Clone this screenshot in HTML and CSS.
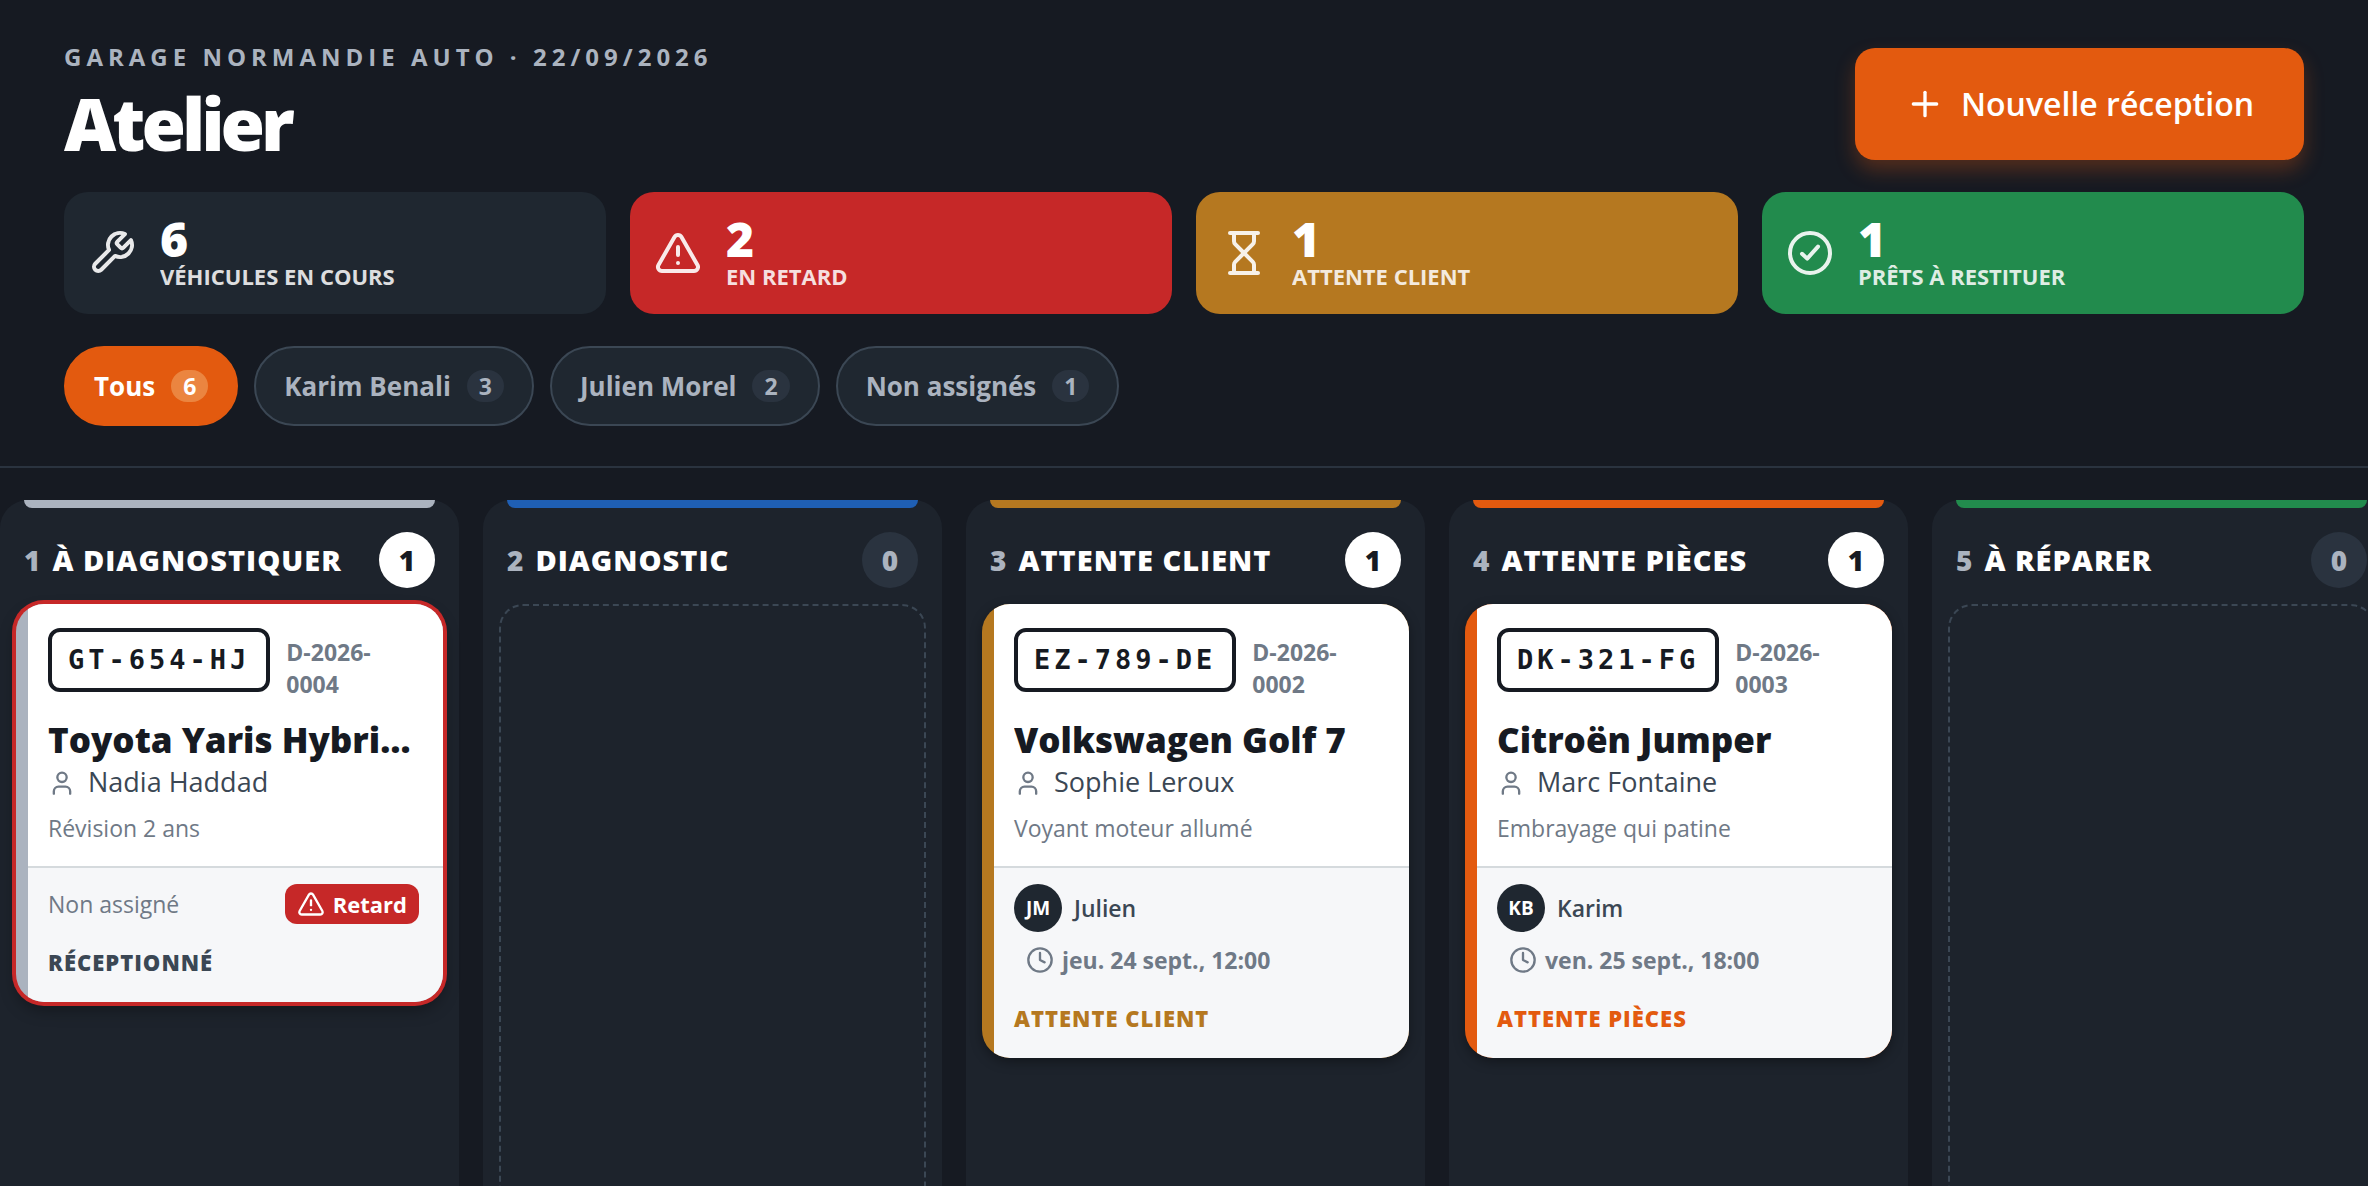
FILE: index.html
```html
<!DOCTYPE html>
<html lang="fr">
<head>
  <meta charset="UTF-8">
  <meta name="viewport" content="width=device-width, initial-scale=1.0">
  <title>Atelier</title>
  <link rel="stylesheet" href="styles.css">
</head>
<body>
  <!-- Icons -->
  <svg class="sprite" aria-hidden="true">
    <symbol id="i-wrench" viewBox="0 0 24 24"><path d="M14.7 6.3a1 1 0 0 0 0 1.4l1.6 1.6a1 1 0 0 0 1.4 0l3.77-3.77a6 6 0 0 1-7.94 7.94l-6.91 6.91a2.12 2.12 0 0 1-3-3l6.91-6.91a6 6 0 0 1 7.94-7.94l-3.76 3.76z"/></symbol>
    <symbol id="i-alert" viewBox="0 0 24 24"><path d="m21.73 18-8-14a2 2 0 0 0-3.48 0l-8 14A2 2 0 0 0 4 21h16a2 2 0 0 0 1.73-3Z"/><path d="M12 9v4"/><path d="M12 17h.01"/></symbol>
    <symbol id="i-hourglass" viewBox="0 0 24 24"><path d="M5 22h14"/><path d="M5 2h14"/><path d="M17 22v-4.172a2 2 0 0 0-.586-1.414L12 12l-4.414 4.414A2 2 0 0 0 7 17.828V22"/><path d="M7 2v4.172a2 2 0 0 0 .586 1.414L12 12l4.414-4.414A2 2 0 0 0 17 6.172V2"/></symbol>
    <symbol id="i-check" viewBox="0 0 24 24"><circle cx="12" cy="12" r="10"/><path d="m8 12.4 2.6 2.4 5.4-6"/></symbol>
    <symbol id="i-plus" viewBox="0 0 24 24"><path d="M5 12h14"/><path d="M12 5v14"/></symbol>
    <symbol id="i-user" viewBox="0 0 24 24"><path d="M19 22v-2a4 4 0 0 0-4-4H9a4 4 0 0 0-4 4v2"/><circle cx="12" cy="8" r="4"/></symbol>
    <symbol id="i-clock" viewBox="0 0 24 24"><circle cx="12" cy="12" r="10"/><path d="M12 6v6l4 2"/></symbol>
  </svg>

  <header class="header">
    <div class="header-top">
      <div>
        <p class="eyebrow">Garage Normandie Auto · 22/09/2026</p>
        <h1>Atelier</h1>
      </div>
      <button type="button" class="btn-new">
        <svg class="icon icon-lg"><use href="#i-plus"/></svg>
        Nouvelle réception
      </button>
    </div>

    <!-- Stats -->
    <div class="stats">
      <div class="stat">
        <svg class="icon icon-xl"><use href="#i-wrench"/></svg>
        <div><div class="stat-value">6</div><div class="stat-label">Véhicules en cours</div></div>
      </div>
      <div class="stat red">
        <svg class="icon icon-xl"><use href="#i-alert"/></svg>
        <div><div class="stat-value">2</div><div class="stat-label">En retard</div></div>
      </div>
      <div class="stat amber">
        <svg class="icon icon-xl"><use href="#i-hourglass"/></svg>
        <div><div class="stat-value">1</div><div class="stat-label">Attente client</div></div>
      </div>
      <div class="stat green">
        <svg class="icon icon-xl"><use href="#i-check"/></svg>
        <div><div class="stat-value">1</div><div class="stat-label">Prêts à restituer</div></div>
      </div>
    </div>

    <!-- Filters -->
    <div class="filters">
      <button type="button" class="chip active">Tous <span class="chip-count">6</span></button>
      <button type="button" class="chip">Karim Benali <span class="chip-count">3</span></button>
      <button type="button" class="chip">Julien Morel <span class="chip-count">2</span></button>
      <button type="button" class="chip">Non assignés <span class="chip-count">1</span></button>
    </div>
  </header>

  <!-- Board -->
  <main class="board">
    <section class="column col-grey">
      <div class="column-head">
        <span class="column-num">1</span>
        <h2>À diagnostiquer</h2>
        <span class="column-count">1</span>
      </div>
      <article class="card late">
        <div class="card-body">
          <div class="card-top">
            <span class="plate">GT-654-HJ</span>
            <span class="ref">D-2026-0004</span>
          </div>
          <h3>Toyota Yaris Hybride</h3>
          <p class="client"><svg class="icon"><use href="#i-user"/></svg>Nadia Haddad</p>
          <p class="issue">Révision 2 ans</p>
        </div>
        <div class="card-foot">
          <div class="card-meta">
            <span class="unassigned">Non assigné</span>
            <span class="tag tag-late"><svg class="icon"><use href="#i-alert"/></svg>Retard</span>
          </div>
          <p class="status">Réceptionné</p>
        </div>
      </article>
    </section>

    <section class="column col-blue">
      <div class="column-head">
        <span class="column-num">2</span>
        <h2>Diagnostic</h2>
        <span class="column-count zero">0</span>
      </div>
      <div class="empty"></div>
    </section>

    <section class="column col-amber">
      <div class="column-head">
        <span class="column-num">3</span>
        <h2>Attente client</h2>
        <span class="column-count">1</span>
      </div>
      <article class="card">
        <div class="card-body">
          <div class="card-top">
            <span class="plate">EZ-789-DE</span>
            <span class="ref">D-2026-0002</span>
          </div>
          <h3>Volkswagen Golf 7</h3>
          <p class="client"><svg class="icon"><use href="#i-user"/></svg>Sophie Leroux</p>
          <p class="issue">Voyant moteur allumé</p>
        </div>
        <div class="card-foot">
          <div class="card-meta">
            <span class="mechanic"><span class="avatar">JM</span>Julien</span>
            <span class="tag"><svg class="icon"><use href="#i-clock"/></svg>jeu. 24 sept., 12:00</span>
          </div>
          <p class="status">Attente client</p>
        </div>
      </article>
    </section>

    <section class="column col-orange">
      <div class="column-head">
        <span class="column-num">4</span>
        <h2>Attente pièces</h2>
        <span class="column-count">1</span>
      </div>
      <article class="card">
        <div class="card-body">
          <div class="card-top">
            <span class="plate">DK-321-FG</span>
            <span class="ref">D-2026-0003</span>
          </div>
          <h3>Citroën Jumper</h3>
          <p class="client"><svg class="icon"><use href="#i-user"/></svg>Marc Fontaine</p>
          <p class="issue">Embrayage qui patine</p>
        </div>
        <div class="card-foot">
          <div class="card-meta">
            <span class="mechanic"><span class="avatar">KB</span>Karim</span>
            <span class="tag"><svg class="icon"><use href="#i-clock"/></svg>ven. 25 sept., 18:00</span>
          </div>
          <p class="status">Attente pièces</p>
        </div>
      </article>
    </section>

    <section class="column col-green">
      <div class="column-head">
        <span class="column-num">5</span>
        <h2>À réparer</h2>
        <span class="column-count zero">0</span>
      </div>
      <div class="empty"></div>
    </section>
  </main>
</body>
</html>
```
FILE: styles.css
```css
:root {
  --bg: #161a22;
  --panel: #1d232c;
  --surface: #1f2730;
  --line: #2a333f;
  --line-2: #3b4754;
  --muted: #abb3bf;
  --ink: #161a22;
  --grey: #6f7986;
  --red: #c62828;
  --amber: #b57820;
  --green: #228b4d;
  --orange: #e35a0f;
  --blue: #1f5fb4;
}

* {
  box-sizing: border-box;
  margin: 0;
  padding: 0;
}

body {
  display: flex;
  flex-direction: column;
  height: 100vh;
  overflow: hidden;
  background: var(--bg);
  color: #fff;
  font-family: "Segoe UI", "Open Sans", "Noto Sans", sans-serif;
  font-size: 23px;
  line-height: 32px;
}

button {
  font: inherit;
  color: inherit;
  border: none;
  cursor: pointer;
}

.sprite {
  display: none;
}

.icon {
  flex: none;
  width: 28px;
  height: 28px;
  fill: none;
  stroke: currentColor;
  stroke-width: 2;
  stroke-linecap: round;
  stroke-linejoin: round;
}
.icon-lg {
  width: 40px;
  height: 40px;
}
.icon-xl {
  width: 48px;
  height: 48px;
  opacity: 0.9;
}

/* Header */
.header {
  flex: none;
  padding: 38px 64px 40px;
  border-bottom: 2px solid var(--line);
}
.header-top {
  display: flex;
  justify-content: space-between;
  align-items: center;
  margin-bottom: 22px;
}
.eyebrow {
  color: var(--muted);
  font-size: 24px;
  font-weight: 700;
  letter-spacing: 5px;
  text-transform: uppercase;
  line-height: 38px;
}
h1 {
  font-size: 72px;
  font-weight: 800;
  letter-spacing: -4px;
  line-height: 94px;
}
.btn-new {
  display: flex;
  align-items: center;
  gap: 16px;
  height: 112px;
  padding: 0 50px;
  border-radius: 20px;
  background: var(--orange);
  box-shadow: 0 10px 20px rgba(227, 90, 15, 0.3);
  font-size: 32px;
  font-weight: 600;
}

.stats {
  display: grid;
  grid-template-columns: repeat(4, 1fr);
  gap: 24px;
  margin-bottom: 32px;
}
.stat {
  position: relative;
  display: flex;
  align-items: center;
  gap: 24px;
  height: 122px;
  padding: 0 24px;
  border-radius: 24px;
  background: var(--surface);
}
.stat-value {
  font-size: 48px;
  font-weight: 800;
  line-height: 46px;
}
.stat-label {
  font-size: 22px;
  font-weight: 700;
  line-height: 28px;
  text-transform: uppercase;
  opacity: 0.85;
}
.stat.red { background: var(--red); }
.stat.amber { background: var(--amber); }
.stat.green { background: var(--green); }

.filters {
  display: flex;
  gap: 16px;
}
.chip {
  display: flex;
  align-items: center;
  gap: 16px;
  height: 80px;
  padding: 0 28px;
  border: 2px solid var(--line-2);
  border-radius: 40px;
  background: var(--surface);
  color: var(--muted);
  font-size: 26px;
  font-weight: 700;
}
.chip-count {
  padding: 0 12px;
  border-radius: 16px;
  background: var(--line);
  font-size: 23px;
}
.chip.active {
  border-color: var(--orange);
  background: var(--orange);
  color: #fff;
}
.chip.active .chip-count {
  background: #eb8540;
}

/* Board */
.board {
  flex: 1;
  display: flex;
  gap: 24px;
  padding-top: 32px;
  overflow: hidden;
}
.column {
  --accent: var(--muted);
  position: relative;
  flex: none;
  display: flex;
  flex-direction: column;
  width: 459px;
  height: 100vh;
  padding: 32px 16px;
  border-radius: 28px;
  background: var(--panel);
}
.column::before {
  content: "";
  position: absolute;
  top: 0;
  left: 24px;
  right: 24px;
  height: 8px;
  border-radius: 0 0 8px 8px;
  background: var(--accent);
}
.col-blue { --accent: var(--blue); }
.col-amber { --accent: var(--amber); }
.col-orange { --accent: var(--orange); }
.col-green { --accent: var(--green); }

.column-head {
  display: flex;
  align-items: center;
  gap: 12px;
  padding: 0 8px;
  margin-bottom: 16px;
  font-size: 28px;
  font-weight: 800;
}
.column-num {
  color: var(--muted);
}
h2 {
  flex: 1;
  font-size: 29px;
  font-weight: 800;
  letter-spacing: 1px;
  text-transform: uppercase;
  white-space: nowrap;
}
.column-count {
  width: 56px;
  border-radius: 50%;
  background: #fff;
  color: var(--ink);
  line-height: 56px;
  text-align: center;
}
.column-count.zero {
  background: var(--line);
  color: var(--muted);
}
.empty {
  flex: 1;
  border: 2px dashed var(--line-2);
  border-radius: 24px;
}

/* Card */
.card {
  overflow: hidden;
  padding-left: 12px;
  border-radius: 28px;
  background: var(--accent);
  color: var(--ink);
  box-shadow: 0 4px 12px rgba(0, 0, 0, 0.35);
}
.card.late {
  box-shadow: 0 0 0 4px var(--red), 0 8px 16px rgba(0, 0, 0, 0.35);
}
.card-body {
  padding: 24px 24px 20px 20px;
  background: #fff;
}
.card-top {
  display: flex;
  align-items: flex-start;
  gap: 16px;
  margin-bottom: 16px;
}
.plate {
  flex: none;
  padding: 0 16px;
  border: 4px solid var(--ink);
  border-radius: 12px;
  font-family: Consolas, "DejaVu Sans Mono", monospace;
  font-size: 27px;
  font-weight: 700;
  letter-spacing: 4px;
  line-height: 56px;
}
.ref {
  max-width: 100px;
  padding-top: 8px;
  color: var(--grey);
  font-size: 23px;
  font-weight: 700;
}
h3 {
  overflow: hidden;
  font-size: 35px;
  font-weight: 800;
  line-height: 48px;
  text-overflow: ellipsis;
  white-space: nowrap;
}
.client {
  display: flex;
  align-items: center;
  gap: 12px;
  color: #3b4754;
  font-size: 27px;
  line-height: 36px;
}
.client .icon {
  color: var(--grey);
}
.issue {
  margin-top: 10px;
  color: var(--grey);
  line-height: 36px;
}
.card-foot {
  padding: 16px 24px 24px 20px;
  border-top: 2px solid #d5dadd;
  background: #f6f7f9;
}
.card-meta {
  display: flex;
  flex-wrap: wrap;
  align-items: center;
  justify-content: space-between;
  gap: 8px;
  margin-bottom: 22px;
}
.unassigned {
  color: var(--grey);
  font-weight: 500;
}
.mechanic {
  display: flex;
  align-items: center;
  gap: 12px;
  width: 100%;
  color: #3b4754;
  font-weight: 600;
}
.avatar {
  width: 48px;
  border-radius: 50%;
  background: var(--surface);
  color: #fff;
  font-size: 19px;
  font-weight: 700;
  line-height: 48px;
  text-align: center;
}
.tag {
  display: flex;
  align-items: center;
  gap: 8px;
  height: 40px;
  padding: 0 12px;
  border-radius: 12px;
  color: var(--grey);
  font-weight: 700;
}
.tag-late {
  background: var(--red);
  color: #fff;
  font-size: 22px;
}
.status {
  color: var(--accent);
  font-size: 22px;
  font-weight: 800;
  letter-spacing: 1px;
  text-transform: uppercase;
}
.late .status {
  color: #3b4754;
}
```
